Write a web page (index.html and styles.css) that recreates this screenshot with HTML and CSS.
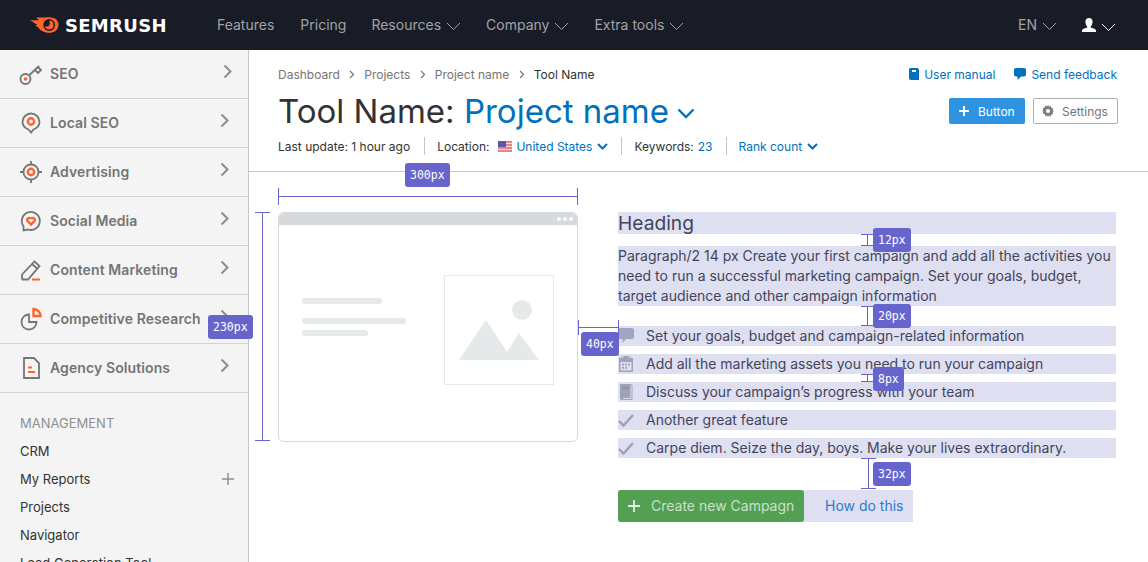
FILE: index.html
```html
<!DOCTYPE html>
<html>
    <head>
        <meta http-equiv="Content-Type" content="text/html;charset=UTF-8">
        <title>Tool Name: Project name</title>
        <link rel="stylesheet" href="styles.css">
    </head>
    <body>

        <!-- top bar -->
        <header class="topbar">
            <div class="logo">
                <svg width="30" height="18" viewBox="0 0 32 19"><path d="M0 4.500h9.500L6.500 1.500h9.500C21 1 27 1.500 29.500 5.500 31 8 30.500 12 28.500 14.500 26 17.500 21 18.500 17 17.500 13.500 16.800 11 15 9 12.500L5.500 9.500H8L0 4.500z" fill="#ff642d"/><circle cx="20.500" cy="9.500" r="6.300" fill="#191c26"/><path d="M20.500 4.800a4.700 4.700 0 1 1-4.600 5.700c1 1 3 1 4.200-.2 1.200-1.200 1.300-3.500.4-5.500z" fill="#ff642d"/></svg>
                <span class="logo-text">SEMRUSH</span>
            </div>
            <nav class="topnav">
                <a class="topnav-first">Features</a>
                <a>Pricing</a>
                <a>Resources <svg class="caret" viewBox="0 0 15 8"><path d="M1 1l6.500 6.500L14 1"/></svg></a>
                <a>Company <svg class="caret" viewBox="0 0 15 8"><path d="M1 1l6.500 6.500L14 1"/></svg></a>
                <a>Extra tools <svg class="caret" viewBox="0 0 15 8"><path d="M1 1l6.500 6.500L14 1"/></svg></a>
            </nav>
            <div class="top-right">
                <a class="lang">EN <svg class="caret" viewBox="0 0 15 8"><path d="M1 1l6.500 6.500L14 1"/></svg></a>
                <a class="user">
                    <svg width="14" height="14" viewBox="0 0 14 14"><path d="M7 0c2.200 0 3.600 1.500 3.600 3.700S9.300 8 8.700 8.700v.8c1.500.5 5.300 1.300 5.300 3V14H0v-1.500c0-1.700 3.800-2.500 5.300-3v-.8C4.700 8 3.400 5.900 3.400 3.700S4.800 0 7 0z" fill="#fff"/></svg>
                    <svg class="caret caret-white" viewBox="0 0 15 8"><path d="M1 1l6.500 6.500L14 1"/></svg>
                </a>
            </div>
        </header>

        <div class="layout">

            <!-- sidebar -->
            <aside class="sidebar">
                <div class="side-item side-item-first">
                    <svg class="side-icon" viewBox="0 0 24 24"><circle cx="6.500" cy="17" r="5" class="ic"/><circle cx="6.500" cy="17" r="1.800" class="ic-fill"/><path d="M10.500 13L20 4M16 8l3 3 3-3-3-3" class="ic"/></svg>
                    <span>SEO</span>
                    <svg class="side-chev" viewBox="0 0 10 15"><path d="M1.500 1.500l6 6-6 6"/></svg>
                </div>
                <div class="side-item">
                    <svg class="side-icon" viewBox="0 0 24 24"><path d="M12 21.500l-2.500-3C6 17 3.500 14.500 3.500 11a8.500 8.500 0 0 1 17 0c0 3.500-2.500 6-6 7.500z" class="ic"/><circle cx="12" cy="10.500" r="3.200" class="ic-orange"/></svg>
                    <span>Local SEO</span>
                    <svg class="side-chev" viewBox="0 0 10 15"><path d="M1.500 1.500l6 6-6 6"/></svg>
                </div>
                <div class="side-item">
                    <svg class="side-icon" viewBox="0 0 24 24"><circle cx="12" cy="12" r="7.500" class="ic"/><circle cx="12" cy="12" r="3.200" class="ic-orange"/><path d="M12 1v3.500M12 19.500V23M1 12h3.500M19.500 12H23" class="ic"/></svg>
                    <span>Advertising</span>
                    <svg class="side-chev" viewBox="0 0 10 15"><path d="M1.500 1.500l6 6-6 6"/></svg>
                </div>
                <div class="side-item">
                    <svg class="side-icon" viewBox="0 0 24 24"><path d="M4.500 21.500v-4.300A9 9 0 1 1 9 20.500z" class="ic"/><path d="M12 15.500l-3.500-3.500c-1-1.500.2-3 1.500-3 1 0 2 .5 2 1 0-.5 1-1 2-1 1.300 0 2.500 1.500 1.500 3z" class="ic-orange"/></svg>
                    <span>Social Media</span>
                    <svg class="side-chev" viewBox="0 0 10 15"><path d="M1.500 1.500l6 6-6 6"/></svg>
                </div>
                <div class="side-item">
                    <svg class="side-icon" viewBox="0 0 24 24"><path d="M3 21.500v-5L15.500 3.500l5 4.500L9 21.500H3M13 6l5 4.500" class="ic"/><path d="M13 21.500h8" class="ic-line"/></svg>
                    <span>Content Marketing</span>
                    <svg class="side-chev" viewBox="0 0 10 15"><path d="M1.500 1.500l6 6-6 6"/></svg>
                </div>
                <div class="side-item">
                    <svg class="side-icon" viewBox="0 0 24 24"><path d="M10 7.500a7.500 7.500 0 1 0 7.500 7.500H10z" class="ic"/><path d="M14.500 2v7h7c0-3.500-3-7-7-7z" class="ic-orange"/></svg>
                    <span>Competitive Research</span>
                    <svg class="side-chev" viewBox="0 0 10 15"><path d="M1.500 1.500l6 6-6 6"/></svg>
                </div>
                <div class="side-item">
                    <svg class="side-icon" viewBox="0 0 24 24"><path d="M5 2h10l5 5v15H5z" class="ic"/><path d="M9 11.500h4M9 16h7" class="ic-line"/></svg>
                    <span>Agency Solutions</span>
                    <svg class="side-chev" viewBox="0 0 10 15"><path d="M1.500 1.500l6 6-6 6"/></svg>
                </div>

                <div class="side-group">
                    <div class="side-title">MANAGEMENT</div>
                    <div class="side-link">CRM</div>
                    <div class="side-link">My Reports <svg class="side-plus" viewBox="0 0 12 12"><path d="M6 0v12M0 6h12"/></svg></div>
                    <div class="side-link">Projects</div>
                    <div class="side-link">Navigator</div>
                    <div class="side-link">Lead Generation Tool</div>
                </div>
            </aside>

            <main class="main">

                <!-- page head -->
                <section class="pagehead">
                    <div class="head-left">
                        <div class="crumbs">
                            <span>Dashboard</span><svg class="crumb-sep" viewBox="0 0 6 9"><path d="M1 1l3.500 3.500L1 8"/></svg>
                            <span>Projects</span><svg class="crumb-sep" viewBox="0 0 6 9"><path d="M1 1l3.500 3.500L1 8"/></svg>
                            <span>Project name</span><svg class="crumb-sep" viewBox="0 0 6 9"><path d="M1 1l3.500 3.500L1 8"/></svg>
                            <span class="crumb-now">Tool Name</span>
                        </div>
                        <h1 class="title">Tool Name: <a>Project name</a><svg class="title-chev" viewBox="0 0 18 11"><path d="M1.500 1.500L9 9l7.500-7.500"/></svg></h1>
                        <div class="meta">
                            <span class="meta-cell">Last update: 1 hour ago</span>
                            <span class="meta-cell">Location:<svg class="flag" width="14" height="11" viewBox="0 0 14 11"><rect width="14" height="11" fill="#e08585"/><rect y="2" width="14" height="1" fill="#f5dcdc"/><rect y="5" width="14" height="1" fill="#f5dcdc"/><rect y="8" width="14" height="1" fill="#f5dcdc"/><rect width="8" height="6" fill="#5757ac"/></svg><a>United States</a><svg class="meta-chev" viewBox="0 0 11 7"><path d="M1 1l4.500 4.500L10 1"/></svg></span>
                            <span class="meta-cell">Keywords:<a class="meta-num">23</a></span>
                            <span class="meta-cell"><a>Rank count</a><svg class="meta-chev" viewBox="0 0 11 7"><path d="M1 1l4.500 4.500L10 1"/></svg></span>
                        </div>
                    </div>
                    <div class="head-right">
                        <div class="head-links">
                            <a><svg width="10" height="12" viewBox="0 0 10 12"><path d="M1.500 0H9v1h1v11H2C.8 12 0 11.200 0 10V1.500C0 .6.600 0 1.500 0zM3 2v2h4V2z" fill="#0071bc" fill-rule="evenodd"/></svg>User manual</a>
                            <a><svg width="12" height="12" viewBox="0 0 12 12"><path d="M2 0h8c1.200 0 2 .8 2 2v4.500c0 1.200-.8 2-2 2H7L3.500 12V8.500H2c-1.200 0-2-.8-2-2V2C0 .8.800 0 2 0z" fill="#0071bc"/></svg>Send feedback</a>
                        </div>
                        <div class="head-btns">
                            <button class="btn btn-blue"><svg width="10" height="10" viewBox="0 0 10 10"><path d="M5 0v10M0 5h10" stroke="#fff" stroke-width="2"/></svg>Button</button>
                            <button class="btn btn-gray"><svg width="12" height="12" viewBox="0 0 12 12"><path d="M6 0l1 1.600 1.900-.5.400 1.900 1.900.5-.5 1.900L12 6l-1.300 1.100.5 1.900-1.900.5-.4 1.900L7 10.400 6 12l-1-1.600-1.900.5-.4-1.900-1.900-.5.500-1.900L0 6l1.300-1.100-.5-1.900 1.900-.5.400-1.900L5 1.600z" fill="#797e83"/><circle cx="6" cy="6" r="2" fill="#fff"/></svg>Settings</button>
                        </div>
                    </div>
                </section>

                <!-- empty state -->
                <section class="content">
                    <div class="art">
                        <div class="art-bar"><i></i><i></i><i></i></div>
                        <div class="art-body">
                            <div class="art-lines">
                                <div class="art-line art-line-a"></div>
                                <div class="art-line art-line-b"></div>
                                <div class="art-line art-line-c"></div>
                            </div>
                            <div class="art-pic">
                                <svg width="108" height="108" viewBox="0 0 108 108"><circle cx="77" cy="34" r="10" fill="#e6e9e9"/><path d="M14 84L41 44l21 32 12-19 20 27z" fill="#e6e9e9"/></svg>
                            </div>
                        </div>
                    </div>
                    <div class="copy">
                        <h2 class="copy-head">Heading</h2>
                        <p class="copy-text">Paragraph/2 14 px Create your first campaign and add all the activities you need to run a successful marketing campaign. Set your goals, budget, target audience and other campaign information</p>
                        <ul class="feats">
                            <li><svg viewBox="0 0 16 16"><path d="M2 0h12c1.100 0 2 .9 2 2v7c0 1.100-.9 2-2 2H8l-3.500 4v-4H2c-1.100 0-2-.9-2-2V2C0 .9.900 0 2 0z" fill="#a0a6c1"/></svg>Set your goals, budget and campaign-related information</li>
                            <li><svg viewBox="0 0 16 16"><path d="M3.500 0h1v2h1V0h5v2h1V0h1v2H15v14H1V2h2.500z" fill="#a0a3b8"/><path d="M2.500 6h11v8.500h-11z" fill="#dfdff2"/><path d="M4 7.500h2v2H4zM7 7.500h2v2H7zM10 7.500h2v2h-2zM4 10.800h2v2H4zM7 10.800h2v2H7z" fill="#a0a3b8"/></svg>Add all the marketing assets you need to run your campaign</li>
                            <li><svg viewBox="0 0 16 16"><path d="M3 0h10l1.500 1.500V16H4c-1.500 0-2-1-2-2V1c0-.6.400-1 1-1z" fill="#a0a3b8"/><path d="M4.500 2.500h7v3h-7z" fill="#8f93ac"/><path d="M13 1.500V14.500H5" stroke="#dfdff2" fill="none"/></svg>Discuss your campaign’s progress with your team</li>
                            <li><svg viewBox="0 0 16 16"><path d="M1 9l4.500 4.500L15 3" stroke="#9ea1b3" stroke-width="2.400" fill="none"/></svg>Another great feature</li>
                            <li><svg viewBox="0 0 16 16"><path d="M1 9l4.500 4.500L15 3" stroke="#9ea1b3" stroke-width="2.400" fill="none"/></svg>Carpe diem. Seize the day, boys. Make your lives extraordinary.</li>
                        </ul>
                        <div class="cta">
                            <button class="btn-green"><svg width="12" height="12" viewBox="0 0 12 12"><path d="M6 0v12M0 6h12" stroke="#e4f0e4" stroke-width="1.800"/></svg><span>Create new Campagn</span></button>
                            <a class="cta-link">How do this</a>
                        </div>
                    </div>
                </section>
            </main>
        </div>

        <!-- redline annotations, they lie over the page -->
        <div class="marks">
            <div class="mark-h" style="left:278px;top:188px;width:300px;height:17px"></div>
            <div class="mark-v" style="left:255px;top:212px;width:15px;height:229px"></div>
            <div class="mark-h" style="left:578px;top:320px;width:41px;height:15px"></div>
            <div class="mark-v" style="left:861px;top:234px;width:12px;height:12px"></div>
            <div class="mark-v" style="left:861px;top:306px;width:12px;height:20px"></div>
            <div class="mark-v" style="left:861px;top:374px;width:12px;height:8px"></div>
            <div class="mark-v" style="left:861px;top:458px;width:15px;height:31px"></div>
            <span class="tag" style="left:405px;top:163px">300px</span>
            <span class="tag" style="left:208px;top:315px">230px</span>
            <span class="tag" style="left:581px;top:332px">40px</span>
            <span class="tag" style="left:873px;top:228px">12px</span>
            <span class="tag" style="left:873px;top:304px">20px</span>
            <span class="tag" style="left:873px;top:367px">8px</span>
            <span class="tag" style="left:873px;top:462px">32px</span>
        </div>

    </body>
</html>
```

FILE: styles.css
```css
* {box-sizing: border-box;}
html, body {height: 100%;}
body {
    margin: 0;
    font-family: Inter, "Noto Sans", sans-serif;
    font-size: 14px;
    color: #333;
    background: #fff;
    overflow: hidden;
    position: relative;
}
a {color: #0071bc;}
svg {flex: none;}

/* top bar */
.topbar {
    height: 50px;
    background: #191c26;
    display: flex;
    align-items: center;
    padding: 0 32px 0 30px;
}
.logo {
    display: flex;
    align-items: center;
    gap: 5px;
    width: 187px;
}
.logo-text {
    font-family: "DejaVu Sans", sans-serif;
    font-size: 18px;
    font-weight: 700;
    letter-spacing: .3px;
    color: #fff;
}
.topnav {
    display: flex;
    gap: 25px;
    margin-bottom: 2px;
    color: #a0a2a8;
}
.topnav-first {margin-right: 1px;}
.topnav a, .lang {
    display: flex;
    align-items: center;
    gap: 5px;
    color: #a0a2a8;
}
.caret {
    width: 15px;
    height: 8px;
    margin-top: 3px;
    fill: none;
    stroke: #a0a2a8;
    stroke-width: 1;
}
.caret-white {stroke: #fff;}
.top-right {
    margin-left: auto;
    display: flex;
    align-items: center;
    gap: 25px;
}
.lang {margin-bottom: 2px;}
.user {
    display: flex;
    align-items: center;
    gap: 5px;
}

/* sidebar */
.layout {
    display: flex;
    height: 512px;
}
.sidebar {
    width: 249px;
    flex: none;
    background: #f4f4f4;
    border-right: 1px solid #c4c7c9;
    overflow: hidden;
}
.side-item {
    height: 49px;
    display: flex;
    align-items: center;
    padding: 0 18px 0 19px;
    border-bottom: 1px solid #d1d4d6;
    font-weight: 600;
    letter-spacing: .1px;
    color: #757575;
}
.side-item span {margin-bottom: 2px;}
.side-item-first {padding-right: 15px;}
.side-icon {
    width: 24px;
    height: 24px;
    margin-right: 7px;
}
.ic {
    fill: none;
    stroke: #757575;
    stroke-width: 1.800;
}
.ic-fill {fill: #ff642d;}
.ic-orange {
    fill: none;
    stroke: #ff642d;
    stroke-width: 2.400;
}
.ic-line {
    fill: none;
    stroke: #ff642d;
    stroke-width: 2;
}
.side-chev {
    width: 10px;
    height: 15px;
    margin: 0 0 6px auto;
    fill: none;
    stroke: #8a8e91;
    stroke-width: 2;
}
.side-group {
    padding: 19px 0 0 20px;
    color: #333;
    font-size: 13px;
}
.side-title {
    height: 22px;
    line-height: 22px;
    color: #909090;
    margin-bottom: 3px;
}
.side-link {
    height: 28px;
    line-height: 28px;
    display: flex;
    align-items: center;
    white-space: nowrap;
}
.side-plus {
    width: 12px;
    height: 12px;
    margin-left: auto;
    margin-right: 14px;
    stroke: #8a8e91;
    stroke-width: 1.400;
    fill: none;
}

/* page head */
.main {flex: 1; min-width: 0;}
.pagehead {
    height: 122px;
    border-bottom: 1px solid #c4c7c9;
    padding: 0 30px 0 29px;
    display: flex;
    justify-content: space-between;
}
.crumbs {
    display: flex;
    align-items: center;
    height: 16px;
    margin-top: 16px;
    font-size: 12px;
    color: #757575;
}
.crumb-sep {
    width: 6px;
    height: 9px;
    margin: 0 9.200px;
    fill: none;
    stroke: #757575;
    stroke-width: 1.200;
}
.crumb-now {color: #333;}
.title {
    margin: 7px 0 0;
    height: 44px;
    line-height: 44px;
    font-size: 33px;
    font-weight: 400;
    color: #333;
    white-space: nowrap;
}
.title-chev {
    width: 18px;
    height: 11px;
    margin-left: 8px;
    vertical-align: 4px;
    fill: none;
    stroke: #0071bc;
    stroke-width: 2.400;
}
.meta {
    display: flex;
    align-items: center;
    margin-top: 4px;
    font-size: 12px;
    height: 18px;
}
.meta-cell {
    display: flex;
    align-items: center;
    height: 18px;
    padding-right: 13px;
    margin-right: 12px;
    border-right: 1px solid #c4c7c9;
    white-space: nowrap;
}
.meta-cell:first-child {padding-right: 14px;}
.meta-cell:last-child {border-right: 0;}
.meta-num {margin-left: 4px;}
.flag {margin: 0 4px 0 9px;}
.meta-chev {
    width: 11px;
    height: 7px;
    margin-left: 5px;
    fill: none;
    stroke: #0071bc;
    stroke-width: 2;
}
.head-right {
    display: flex;
    flex-direction: column;
    align-items: flex-end;
}
.head-links {
    display: flex;
    gap: 19px;
    height: 16px;
    margin: 16px 1px 0 0;
    font-size: 12px;
}
.head-links a {
    display: flex;
    align-items: center;
    gap: 5px;
}
.head-btns {
    display: flex;
    gap: 8px;
    margin-top: 16px;
}
.btn {
    height: 26px;
    display: flex;
    align-items: center;
    gap: 9px;
    border-radius: 2px;
    font: 12px Inter, sans-serif;
}
.btn-blue {
    background: #2e94e0;
    border: 0;
    color: #fff;
    width: 76px;
    padding: 0 0 0 10px;
}
.btn-gray {
    background: #fff;
    border: 1px solid #abb0b3;
    color: #757575;
    width: 85px;
    gap: 8px;
    padding: 0 0 0 8px;
}

/* illustration and copy */
.content {
    display: flex;
    gap: 40px;
    padding: 40px 32px 0 29px;
}
.art {
    width: 300px;
    height: 230px;
    flex: none;
    border: 1px solid #d6d9da;
    border-radius: 6px;
    overflow: hidden;
}
.art-bar {
    height: 12px;
    background: #d6dadc;
    display: flex;
    justify-content: flex-end;
    align-items: center;
    gap: 2px;
    padding-right: 4px;
}
.art-bar i {
    width: 4px;
    height: 4px;
    background: #fff;
    border-radius: 50%;
}
.art-body {
    display: flex;
    align-items: center;
    padding: 50px 23px 0 23px;
}
.art-lines {width: 142px;margin-bottom: 26px;}
.art-line {
    height: 6px;
    border-radius: 3px;
    background: #e6e9e9;
}
.art-line-a {width: 80px;margin-bottom: 14px;}
.art-line-b {width: 104px;margin-bottom: 6px;}
.art-line-c {width: 66px;}
.art-pic {
    width: 110px;
    height: 110px;
    border: 1px solid #e6e9e9;
}
.copy {flex: 1; min-width: 0; color: #43455a;}
.copy-head {
    margin: 0 0 12px;
    height: 22px;
    line-height: 22px;
    font-size: 19.200px;
    font-weight: 400;
    background: #dfdff2;
}
.copy-text {
    margin: 0 0 20px;
    line-height: 20px;
    background: #dfdff2;
}
.feats {
    list-style: none;
    margin: 0 0 32px;
    padding: 0;
    display: flex;
    flex-direction: column;
    gap: 8px;
}
.feats li {
    height: 20px;
    line-height: 20px;
    background: #dfdff2;
    display: flex;
    align-items: center;
    gap: 12px;
}
.feats svg {width: 16px; height: 16px;}
.cta {
    display: flex;
    width: 295px;
    height: 32px;
    background: #dfdff2;
}
.btn-green {
    width: 186px;
    height: 32px;
    background: #53a053;
    border: 0;
    border-radius: 3px;
    color: #c9e0c9;
    font: 14px Inter, sans-serif;
    display: flex;
    align-items: center;
    gap: 11px;
    padding: 0 0 0 10px;
}
.btn-green span {margin-bottom: 1px;}
.cta-link {
    line-height: 32px;
    margin-left: 21px;
    color: #2b7ccb;
}

/* annotations */
.marks {
    position: absolute;
    left: 0;
    top: 0;
    width: 1148px;
    height: 562px;
    pointer-events: none;
}
.mark-h, .mark-v {
    position: absolute;
    border: 0 solid #6765cc;
}
.mark-h {
    border-width: 0 1px;
    background: linear-gradient(#6765cc, #6765cc) center / 100% 1px no-repeat;
}
.mark-v {
    border-width: 1px 0;
    background: linear-gradient(#6765cc, #6765cc) center / 1px 100% no-repeat;
}
.tag {
    position: absolute;
    height: 24px;
    line-height: 25px;
    padding: 0 5px;
    border-radius: 3px;
    background: #6765cc;
    color: #fff;
    font-family: "DejaVu Sans Mono", monospace;
    font-size: 11.500px;
}
```
